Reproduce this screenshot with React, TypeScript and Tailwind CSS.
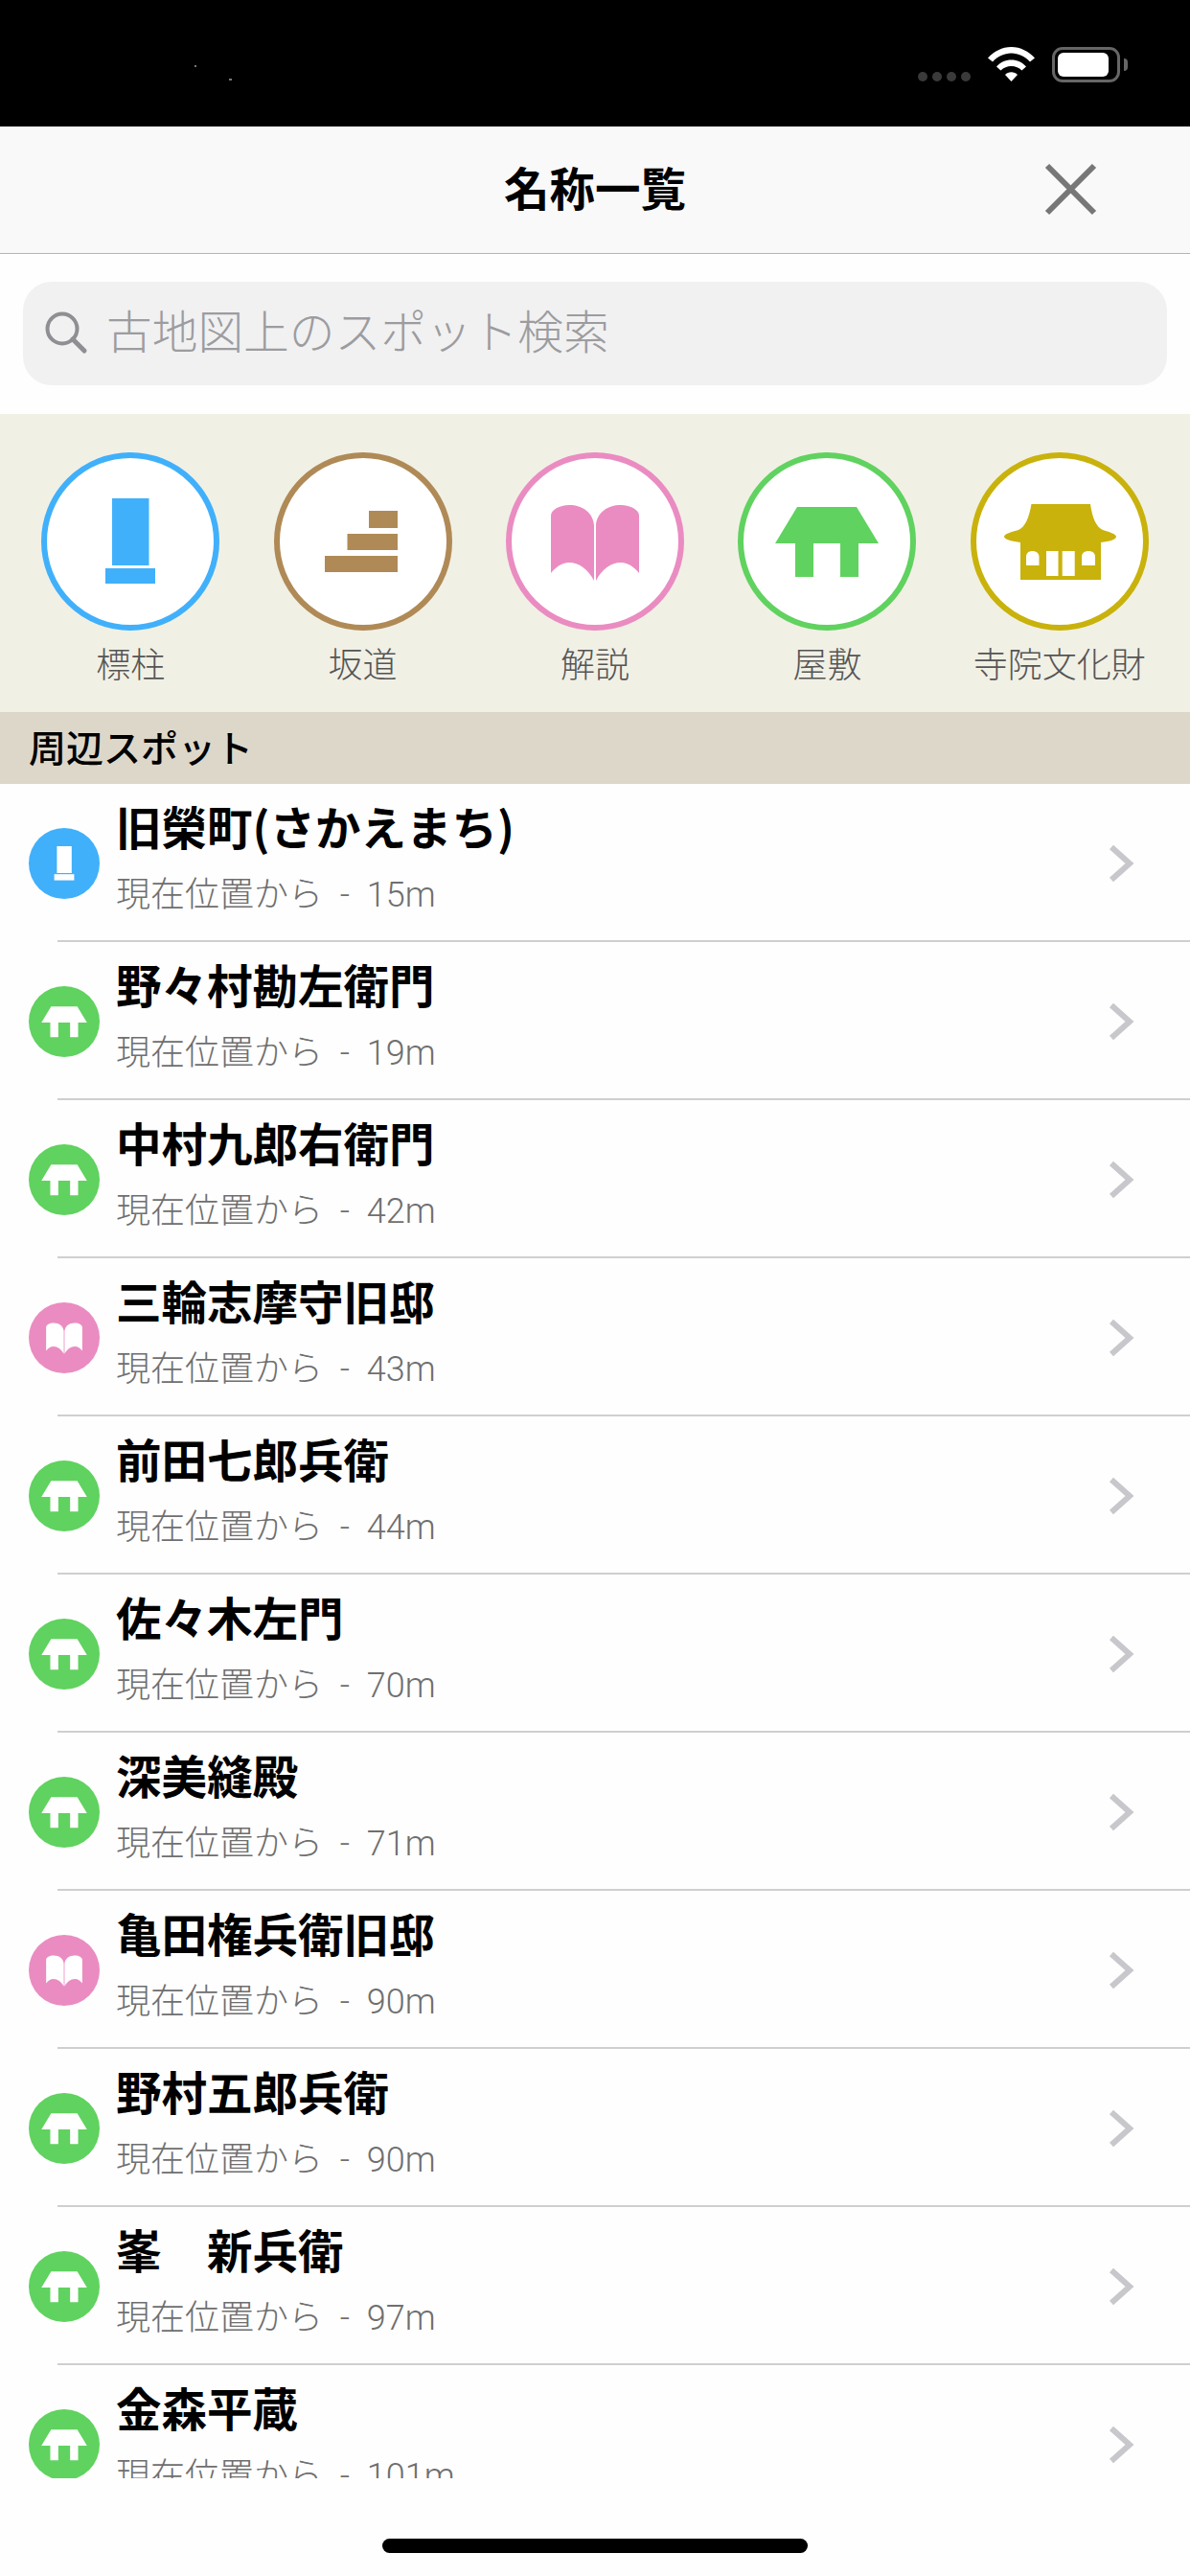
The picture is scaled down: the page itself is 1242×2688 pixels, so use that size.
import React from "react";

type Kind = "pillar" | "slope" | "book" | "house" | "temple";

const FONT = "font-['Noto_Sans_CJK_JP','Noto_Sans',sans-serif]";

const COLORS: Record<Kind, string> = {
  pillar: "#40b0fb",
  slope: "#b08a56",
  book: "#ea8cc1",
  house: "#60d25f",
  temple: "#c9b20c",
};

function Glyph({ kind, fill, hole }: { kind: Kind; fill: string; hole: string }) {
  switch (kind) {
    case "pillar":
      return (
        <g fill={fill}>
          <rect x="74" y="48" width="38.5" height="70" />
          <rect x="67" y="121" width="52" height="16" />
        </g>
      );
    case "slope":
      return (
        <g fill={fill}>
          <rect x="99" y="61" width="30" height="18" />
          <rect x="76.5" y="85" width="52.5" height="17" />
          <rect x="53" y="108" width="76" height="17" />
        </g>
      );
    case "book":
      return (
        <g fill={fill}>
          <path d="M47 66C47 60 56 55 66 55C80 55 91 63 92 76V134C86 122 76 115 66 115C58 115 52 120 47 126Z" />
          <path d="M139 66C139 60 130 55 120 55C106 55 95 63 94 76V134C100 122 110 115 120 115C128 115 134 120 139 126Z" />
        </g>
      );
    case "house":
      return (
        <path
          fill={fill}
          d="M62 57H124L147 95H126V130H107V95H79V130H60V95H39Z"
        />
      );
    case "temple":
      return (
        <g>
          <path
            fill={fill}
            d="M63.5 54H125C127 68 131 78 138 81C144 83 152 85 152 88C152 91 145 93 136 94V133H52V94C44 93 35 91 35 88C35 85 43 83 50 81C57 78 61 68 63.5 54Z"
          />
          <g fill={hole}>
            <path d="M58 118V109C58 105 61 103 64.5 103C68 103 71.5 105 71.5 109V118Z" />
            <rect x="79" y="103" width="12.5" height="26" />
            <rect x="95.7" y="103" width="13" height="26" />
            <path d="M116 118V109C116 105 119 103 123 103C127 103 130 105 130 109V118Z" />
          </g>
        </g>
      );
  }
}

const SMALL_SCALE: Record<Kind, number> = {
  pillar: 0.4,
  slope: 0.4,
  book: 0.41,
  house: 0.44,
  temple: 0.4,
};

function BigIcon({ kind }: { kind: Kind }) {
  const c = COLORS[kind];
  return (
    <svg width="186" height="186" viewBox="0 0 186 186" className="block">
      <circle cx="93" cy="93" r="90" fill="#ffffff" stroke={c} strokeWidth="6" />
      <Glyph kind={kind} fill={c} hole="#ffffff" />
    </svg>
  );
}

function SmallIcon({ kind }: { kind: Kind }) {
  const c = COLORS[kind];
  const s = SMALL_SCALE[kind];
  return (
    <svg width="74" height="74" viewBox="0 0 74 74" className="block shrink-0">
      <circle cx="37" cy="37" r="37" fill={c} />
      <g transform={`translate(37 37) scale(${s}) translate(-93 -93)`}>
        <Glyph kind={kind} fill="#ffffff" hole={c} />
      </g>
    </svg>
  );
}

const CATEGORIES: { kind: Kind; label: string }[] = [
  { kind: "pillar", label: "標柱" },
  { kind: "slope", label: "坂道" },
  { kind: "book", label: "解説" },
  { kind: "house", label: "屋敷" },
  { kind: "temple", label: "寺院文化財" },
];

const SPOTS: { kind: Kind; name: string; dist: string }[] = [
  { kind: "pillar", name: "旧榮町(さかえまち)", dist: "15m" },
  { kind: "house", name: "野々村勘左衛門", dist: "19m" },
  { kind: "house", name: "中村九郎右衛門", dist: "42m" },
  { kind: "book", name: "三輪志摩守旧邸", dist: "43m" },
  { kind: "house", name: "前田七郎兵衛", dist: "44m" },
  { kind: "house", name: "佐々木左門", dist: "70m" },
  { kind: "house", name: "深美縫殿", dist: "71m" },
  { kind: "book", name: "亀田権兵衛旧邸", dist: "90m" },
  { kind: "house", name: "野村五郎兵衛", dist: "90m" },
  { kind: "house", name: "峯　新兵衛", dist: "97m" },
  { kind: "house", name: "金森平蔵", dist: "101m" },
];

function StatusBar() {
  return (
    <div className="h-[132px] shrink-0 bg-black flex items-start justify-between">
      <svg width="60" height="40" viewBox="0 0 60 40" className="ml-[190px] mt-[60px]">
        <rect x="13" y="8" width="2" height="2" fill="#777" />
        <rect x="49" y="22" width="3" height="2" fill="#777" />
      </svg>
      <div className="flex items-start mt-[49px] mr-[65px]">
        <div className="flex gap-[5px] mt-[26px] mr-[18px]">
          <div className="w-[10px] h-[10px] rounded-full bg-[#3a3a3a]" />
          <div className="w-[10px] h-[10px] rounded-full bg-[#3a3a3a]" />
          <div className="w-[10px] h-[10px] rounded-full bg-[#3a3a3a]" />
          <div className="w-[10px] h-[10px] rounded-full bg-[#3a3a3a]" />
        </div>
        <svg width="49" height="36" viewBox="0 0 49 36" className="mr-[18px]">
          <path fill="#fff" d="M0 11.5C6.5 4.5 15 0 24.5 0C34 0 42.5 4.5 49 11.5L44 15.5C39 10 32 6.5 24.5 6.5C17 6.5 10 10 5 15.5Z" />
          <path fill="#fff" d="M9 20.5C13 16 18.5 13.5 24.5 13.5C30.5 13.5 36 16 40 20.5L35.5 24.5C32.5 21.5 28.7 20 24.5 20C20.3 20 16.5 21.5 13.5 24.5Z" />
          <path fill="#fff" d="M18 29C19.7 27.2 22 26.2 24.5 26.2C27 26.2 29.3 27.2 31 29L24.5 36Z" />
        </svg>
        <div className="flex items-center">
          <div className="w-[71px] h-[37px] rounded-[11px] border-[3px] border-[#666666] p-[3px]">
            <div className="w-[53px] h-[25px] rounded-[6px] bg-white" />
          </div>
          <div className="w-[4px] h-[13px] ml-[4px] rounded-r-full bg-[#666666]" />
        </div>
      </div>
    </div>
  );
}

function Header() {
  return (
    <div className="h-[133px] shrink-0 bg-[#f9f9f9] border-b border-[#b4b4b4] grid grid-cols-[1fr_auto_1fr] items-center">
      <div />
      <div className="text-[47.5px] leading-[60px] font-bold text-black -mt-[6px]">名称一覧</div>
      <div className="flex justify-end pr-[97px]">
        <svg width="55" height="55" viewBox="0 0 55 55" className="block -mt-[2px]">
          <path d="M3 3L52 52M52 3L3 52" stroke="#777777" strokeWidth="6" fill="none" />
        </svg>
      </div>
    </div>
  );
}

function Search() {
  return (
    <div className="h-[167px] shrink-0 pt-[29px] px-[24px]">
      <div className="h-[108px] rounded-[30px] bg-[#f1f1f1] flex items-center pl-[22px] gap-[19px]">
        <svg width="46" height="46" viewBox="0 0 46 46" className="block shrink-0 -mt-[2px]">
          <circle cx="19" cy="19" r="15.5" stroke="#8e8e93" strokeWidth="4" fill="none" />
          <path d="M30 30L42 42" stroke="#8e8e93" strokeWidth="5" strokeLinecap="round" />
        </svg>
        <span className="text-[47.7px] leading-[60px] text-[#9c9ca0] font-light -mt-[8px]">古地図上のスポット検索</span>
      </div>
    </div>
  );
}

function Categories() {
  return (
    <div className="h-[311px] shrink-0 bg-[#f1f0e5] grid grid-cols-5 px-[15px] pt-[40px]">
      {CATEGORIES.map((c) => (
        <div key={c.kind} className="flex flex-col items-center">
          <BigIcon kind={c.kind} />
          <span className="mt-[11px] text-[36px] leading-[44px] text-[#555555] font-light whitespace-nowrap">{c.label}</span>
        </div>
      ))}
    </div>
  );
}

function Row({ kind, name, dist }: { kind: Kind; name: string; dist: string }) {
  return (
    <div className="h-[165px] shrink-0 relative flex items-center pl-[30px]">
      <SmallIcon kind={kind} />
      <div className="ml-[17px] flex-1 min-w-0 flex flex-col -mt-[14px]">
        <div className="text-[47.5px] leading-[60px] font-bold text-black whitespace-pre">{name}</div>
        <div className="mt-[20px] text-[36px] leading-[44px] text-[#6f6f6f] font-light font-['Roboto','Noto_Sans_CJK_JP',sans-serif] [word-spacing:9px]">{`現在位置から - ${dist}`}</div>
      </div>
      <svg width="30" height="46" viewBox="0 0 30 46" className="block shrink-0 mr-[57px]">
        <path d="M5 6L24 23L5 40" stroke="#c7c7cc" strokeWidth="6" fill="none" />
      </svg>
      <div className="absolute left-[60px] right-0 bottom-0 h-[2px] bg-[#cfcfd1]" />
    </div>
  );
}

export default function App() {
  return (
    <div className={`w-[1242px] h-[2688px] bg-[#fefefe] flex flex-col overflow-hidden ${FONT}`}>
      <StatusBar />
      <Header />
      <Search />
      <Categories />
      <div className="h-[75px] shrink-0 bg-[#ddd7ca] flex items-center pl-[30px]">
        <span className="text-[39px] leading-[50px] font-medium text-black -mt-[6px]">周辺スポット</span>
      </div>
      <div className="h-[1768px] shrink-0 overflow-hidden flex flex-col">
        {SPOTS.map((s, i) => (
          <Row key={i} kind={s.kind} name={s.name} dist={s.dist} />
        ))}
      </div>
      <div className="flex-1 flex justify-center pt-[63px]">
        <div className="w-[444px] h-[15px] rounded-full bg-black" />
      </div>
    </div>
  );
}
